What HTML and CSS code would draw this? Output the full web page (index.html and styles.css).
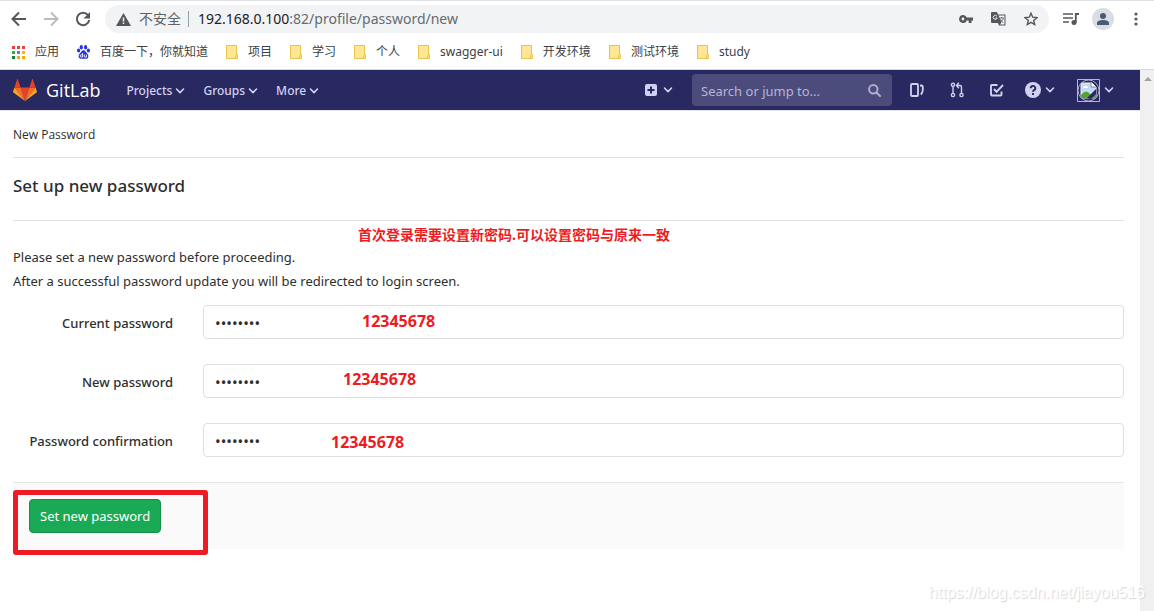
FILE: index.html
```html
<!DOCTYPE html>
<html lang="en">
<head>
<meta charset="utf-8">
<meta name="viewport" content="width=device-width, initial-scale=1">
<title>New Password · GitLab</title>
<link rel="stylesheet" href="styles.css">
</head>
<body>
<svg class="defs" width="0" height="0" aria-hidden="true">
  <symbol id="chevron" viewBox="0 0 10 10"><path d="M1.500 3l3.500 3.600L8.500 3" fill="none" stroke="currentColor" stroke-width="1.600" stroke-linecap="round" stroke-linejoin="round"/></symbol>
  <symbol id="folder" viewBox="0 0 12 14"><path d="M.5.500h10v9h1v4H.5z" fill="#ffe694" stroke="#e8c44d"/><path d="M9.500 13.500v-3l1-1" fill="none" stroke="#e8c44d"/></symbol>
</svg>
<div class="browser">
  <div class="toolbar">
    <button class="tool" aria-label="Back"><svg width="16" height="16" viewBox="0 0 16 16"><path d="M15 8H2M8 1.500L1.500 8 8 14.500" fill="none" stroke="#54585d" stroke-width="2"/></svg></button>
    <button class="tool" aria-label="Forward"><svg width="16" height="16" viewBox="0 0 16 16"><path d="M1 8h13M8 1.500L14.500 8 8 14.500" fill="none" stroke="#babcbe" stroke-width="2"/></svg></button>
    <button class="tool" aria-label="Reload"><svg width="16" height="16" viewBox="0 0 16 16"><path d="M13 4.200A6.200 6.200 0 1 0 14.200 9" fill="none" stroke="#54585d" stroke-width="2"/><path d="M15 1v6.500H8.500z" fill="#54585d"/></svg></button>
    <div class="omnibox">
      <svg width="15" height="13" viewBox="0 0 15 13"><path d="M7.500 0L15 13H0z" fill="#54585d"/><path d="M7.500 4.500v4M7.500 9.500v1.500" stroke="#f1f3f4" stroke-width="1.500"/></svg>
      <span class="insecure">不安全</span>
      <span class="url" role="textbox" aria-label="Address"><span class="host">192.168.0.100</span>:82/profile/password/new</span>
      <button class="tool" aria-label="Saved passwords"><svg width="14" height="8" viewBox="0 0 14 8"><path fill-rule="evenodd" d="M4 0a4 4 0 0 1 3.800 2.600H14v3h-1.500V8H9.700V5.600H7.800A4 4 0 1 1 4 0zM4 2.600a1.400 1.400 0 1 0 0 2.800 1.400 1.400 0 0 0 0-2.800z" fill="#54585d"/></svg></button>
      <button class="tool" aria-label="Translate"><svg width="15" height="14" viewBox="0 0 15 14"><path d="M1 0h5l1 2.500h7.500v11H8L7 11H1a1 1 0 0 1-1-1V1a1 1 0 0 1 1-1z" fill="#54585d"/><path d="M7.500 3.500h6v9H9l1.500-2z" fill="#f1f3f4"/><path d="M6 4.300A2 2 0 1 0 6.200 6H4.500" fill="none" stroke="#f1f3f4"/><path d="M8.500 6h4.500M10.700 5v1M12.300 6c-.3 2-1.500 3.300-3 4M9.300 7.200c.8 1.500 1.800 2.500 3 3.300" fill="none" stroke="#54585d" stroke-width=".8"/></svg></button>
      <button class="tool" aria-label="Bookmark this page"><svg width="14" height="14" viewBox="0 0 14 14"><path d="M7 1.200l1.700 4 4.300.4-3.300 2.800 1 4.200L7 10.400l-3.700 2.200 1-4.200L1 5.600l4.300-.4z" fill="none" stroke="#54585d" stroke-width="1.400"/></svg></button>
    </div>
    <button class="tool" aria-label="Media"><svg width="16" height="12" viewBox="0 0 16 12"><path d="M0 1h10M0 5h10M0 9h6" stroke="#54585d" stroke-width="1.600"/><path d="M12.800 9.500V1H16" fill="none" stroke="#54585d" stroke-width="1.800"/><circle cx="11" cy="9.500" r="2.500" fill="#54585d"/></svg></button>
    <button class="tool profile" aria-label="Profile"><svg width="12" height="12" viewBox="0 0 12 12"><circle cx="6" cy="3" r="3" fill="#4a5a72"/><path d="M0 12V10c0-2 3-3 6-3s6 1 6 3v2z" fill="#4a5a72"/></svg></button>
    <button class="tool" aria-label="Menu"><svg width="4" height="14" viewBox="0 0 4 14" fill="#54585d"><circle cx="2" cy="2" r="1.600"/><circle cx="2" cy="7" r="1.600"/><circle cx="2" cy="12" r="1.600"/></svg></button>
  </div>
  <nav class="bookmarks" aria-label="Bookmarks">
    <a href="#"><svg width="13" height="13" viewBox="0 0 13 13"><path d="M0 0h3v3H0zM5 0h3v3H5zM10 0h3v3h-3z" fill="#ea4335"/><path d="M0 5h3v3H0z" fill="#34a853"/><path d="M5 5h3v3H5z" fill="#4285f4"/><path d="M10 5h3v3h-3z" fill="#fbbc05"/><path d="M0 10h3v3H0z" fill="#188038"/><path d="M5 10h3v3H5zM10 10h3v3h-3z" fill="#fbab05"/></svg>应用</a>
    <a href="#"><svg width="13" height="14" viewBox="0 0 13 14" fill="#2932e1"><ellipse cx="4.300" cy="2.200" rx="1.600" ry="2.200"/><ellipse cx="8.600" cy="2.200" rx="1.600" ry="2.200"/><ellipse cx="1.600" cy="5.500" rx="1.600" ry="2"/><ellipse cx="11.400" cy="5.500" rx="1.600" ry="2"/><path d="M6.500 5.300c1.800 0 2.500 2 3.700 3.100 1.700 1.500 1.700 5.200-1.200 5.400-1.700.1-3.300-.2-5 0C1.200 14 .9 10.200 2.800 8.600 4.200 7.400 4.700 5.300 6.500 5.300z"/><path d="M5.600 8v4H4.200a1 1 0 0 1 0-2.200h1.400M7.300 9.500v2q0 .6.600.6h1.500V9.500" fill="none" stroke="#fff" stroke-width=".9"/></svg>百度一下，你就知道</a>
    <a href="#"><svg width="12" height="14"><use href="#folder"/></svg>项目</a>
    <a href="#"><svg width="12" height="14"><use href="#folder"/></svg>学习</a>
    <a href="#"><svg width="12" height="14"><use href="#folder"/></svg>个人</a>
    <a href="#"><svg width="12" height="14"><use href="#folder"/></svg>swagger-ui</a>
    <a href="#"><svg width="12" height="14"><use href="#folder"/></svg>开发环境</a>
    <a href="#"><svg width="12" height="14"><use href="#folder"/></svg>测试环境</a>
    <a href="#"><svg width="12" height="14"><use href="#folder"/></svg>study</a>
  </nav>
</div>
<div class="viewport">
  <div class="page">
    <header class="navbar">
      <a class="brand" href="#"><svg width="24" height="22" viewBox="0 0 24 22"><path d="M12 22L7.600 8.500h8.800z" fill="#e24329"/><path d="M12 22L7.600 8.500H1.400zM12 22l4.400-13.500h6.200z" fill="#fc6d26"/><path d="M1.400 8.500L.1 12.600c-.1.400 0 .8.300 1L12 22zM22.600 8.500l1.300 4.100c.1.400 0 .8-.3 1L12 22z" fill="#fca326"/><path d="M1.400 8.500h6.200L4.900.4c-.1-.4-.7-.4-.8 0zM22.600 8.500h-6.200L19.100.4c.1-.4.7-.4.8 0z" fill="#e24329"/></svg><span>GitLab</span></a>
      <nav class="menus" aria-label="Main">
        <button>Projects<svg width="10" height="10"><use href="#chevron"/></svg></button>
        <button>Groups<svg width="10" height="10"><use href="#chevron"/></svg></button>
        <button>More<svg width="10" height="10"><use href="#chevron"/></svg></button>
      </nav>
      <button class="add" aria-label="New"><svg width="12" height="12" viewBox="0 0 12 12"><rect width="12" height="12" rx="2" fill="#d1d1f0"/><path d="M6 2.500v7M2.500 6h7" stroke="#292961" stroke-width="2"/></svg><svg width="10" height="10"><use href="#chevron"/></svg></button>
      <label class="search"><input type="text" placeholder="Search or jump to..." aria-label="Search"><svg width="13" height="13" viewBox="0 0 13 13"><circle cx="5.300" cy="5.300" r="4.200" fill="none" stroke="#aeaed2" stroke-width="2"/><path d="M8.500 8.500l3.500 3.500" stroke="#aeaed2" stroke-width="2" stroke-linecap="round"/></svg></label>
      <div class="shortcuts">
        <a href="#" aria-label="Issues"><svg width="14" height="14" viewBox="0 0 14 14" fill="none" stroke="currentColor" stroke-width="1.800"><rect x="1" y="1" width="7" height="12" rx="1"/><path d="M10 2.500h1.200q1.600 0 1.600 1.700v2.600q0 2.800-2 4.700" /></svg></a>
        <a href="#" aria-label="Merge requests"><svg width="14" height="16" viewBox="0 0 14 16" fill="none" stroke="currentColor" stroke-width="1.400"><circle cx="3" cy="2.800" r="1.600"/><circle cx="3" cy="13" r="1.600"/><circle cx="11.500" cy="13" r="1.600"/><path d="M3 4.500v7M11.500 11.500V5q0-1.500-1.500-1.500H7M8.800.8L6.500 3.500l2.300 2.700"/></svg></a>
        <a href="#" aria-label="To-Do List"><svg width="14" height="14" viewBox="0 0 14 14" fill="none" stroke="currentColor" stroke-width="1.900"><path d="M7.500 2H2q-1 0-1 1v8.500q0 1 1 1h8.500q1 0 1-1V8.500M4 6l2.500 2.800L13 2"/></svg></a>
      </div>
      <button class="drop" aria-label="Help"><svg width="16" height="16" viewBox="0 0 16 16"><circle cx="8" cy="8" r="8" fill="#d1d1f0"/><path d="M5.700 6.200a2.300 2.200 0 1 1 3.300 1.900q-1 .6-1 1.600M8 11v2" fill="none" stroke="#292961" stroke-width="1.900"/></svg><svg width="10" height="10"><use href="#chevron"/></svg></button>
      <button class="drop user" aria-label="Account"><svg width="23" height="23" viewBox="0 0 23 23"><clipPath id="pic"><circle cx="11.500" cy="11.500" r="10.500"/></clipPath><g clip-path="url(#pic)"><path d="M4 4h11l4 4v11H4z" fill="#c5d9f7" stroke="#f4f4f6"/><path d="M14 3v5h5" fill="#fff" stroke="#888"/><path d="M4 19v-3q5-7 10 0l5-4v7z" fill="#4fa52e"/><path d="M6 9q1-3 3-2 2 0 2 2z" fill="#fff"/><path d="M10 19l9-9v5l-5 5z" fill="#292961"/></g><circle cx="11.500" cy="11.500" r="10.500" fill="none" stroke="#a9a9ca"/><path d="M.5.500h22v22H.5z" fill="none" stroke="#b8b8bd"/></svg><svg width="10" height="10"><use href="#chevron"/></svg></button>
    </header>
    <main class="content">
      <div class="breadcrumb"><a href="#">New Password</a></div>
      <h1>Set up new password</h1>
      <form class="form">
        <p>Please set a new password before proceeding.<br>After a successful password update you will be redirected to login screen.</p>
        <div class="row"><label for="current">Current password</label><input id="current" type="password" value="12345678"></div>
        <div class="row"><label for="new">New password</label><input id="new" type="password" value="12345678"></div>
        <div class="row"><label for="confirm">Password confirmation</label><input id="confirm" type="password" value="12345678"></div>
        <div class="actions"><button type="button">Set new password</button></div>
        <span class="note note-top">首次登录需要设置新密码.可以设置密码与原来一致</span>
        <span class="note note-current">12345678</span>
        <span class="note note-new">12345678</span>
        <span class="note note-confirm">12345678</span>
        <span class="frame"></span>
      </form>
    </main>
  </div>
  <div class="scrollbar"><svg width="8" height="4" viewBox="0 0 8 4"><path d="M4 0l4 4H0z" fill="#a3a3a3"/></svg></div>
</div>
<div class="watermark">https://blog.csdn.net/jiayou516</div>
</body>
</html>
```
FILE: styles.css
```css
* { box-sizing: border-box; }
body {
  margin: 0;
  min-height: 100vh;
  display: flex;
  flex-direction: column;
  position: relative;
  background: #fff;
  color: #2e2e2e;
  font: 13px/24px "Noto Sans", "Noto Sans CJK SC", sans-serif;
}
.defs { position: absolute; }
svg { display: block; flex: none; }
a { color: inherit; text-decoration: none; }
button { font: inherit; color: inherit; background: none; border: 0; padding: 0; }

.browser { border-top: 1px solid #dee1e6; border-bottom: 1px solid #d8d9de; }
.toolbar { display: flex; align-items: center; gap: 16px; height: 36px; padding: 0 16px 0 11px; }
.tool { display: flex; align-items: center; justify-content: center; flex: none; }
.omnibox {
  flex: 1;
  display: flex;
  align-items: center;
  gap: 18px;
  height: 28px;
  margin: 0 -2px 0 -2px;
  padding: 0 11px;
  border-radius: 14px;
  background: #f1f3f4;
}
.insecure {
  margin: 0 -9px 0 -10px;
  padding-right: 7px;
  border-right: 1px solid #9aa0a6;
  line-height: 16px;
  font-size: 14px;
  color: #5f6368;
}
.url { flex: 1; font-size: 14px; color: #666b70; white-space: nowrap; }
.host { color: #202124; }
.profile { width: 22px; height: 22px; margin: 0 4px 0 -3px; border-radius: 50%; background: #dadde3; }
.bookmarks { display: flex; align-items: center; gap: 18px; height: 32px; padding: 0 12px 2px; font-size: 12px; color: #3c4043; white-space: nowrap; }
.bookmarks a { display: flex; align-items: center; gap: 10px; }

.viewport { flex: 1; display: flex; }
.page { flex: 1; min-width: 0; }
.scrollbar { width: 14px; padding: 7px 0 0 4px; background: #f0f0f0; }

.navbar { display: flex; align-items: center; height: 41px; padding: 0 26px 0 13px; border-bottom: 1px solid #e4e4ea; background: #292961; color: #d1d1f0; }
.navbar button { display: flex; align-items: center; gap: 6px; }
.brand { display: flex; align-items: center; gap: 9px; color: #fff; font-size: 18px; font-family: "Open Sans", sans-serif; }
.menus { display: flex; gap: 18px; margin: 0 auto 0 26px; font-size: 12px; font-weight: 500; }
.navbar .menus button { gap: 3px; padding-top: 1px; }
.search { display: flex; align-items: center; width: 200px; height: 32px; margin: 0 18px 0 19px; padding: 0 11px 0 9px; border-radius: 4px; background: #4c4c7c; }
.search input { flex: 1; min-width: 0; padding: 1px 0 0; border: 0; outline: 0; background: none; font: inherit; color: #fff; }
.search input::placeholder { color: #b4b4d8; opacity: 1; }
.shortcuts { display: flex; align-items: center; gap: 26px; margin-right: 21px; }
.user { margin-left: 22px; }
.navbar .drop { gap: 4px; }

.content { padding: 0 16px 0 13px; }
.breadcrumb { height: 47px; border-bottom: 1px solid #e1e1e1; font: 12px/47px "Open Sans", sans-serif; }
h1 { margin: 0; height: 63px; border-bottom: 1px solid #e1e1e1; font-size: 17px; font-weight: 500; line-height: 56px; }
.form { position: relative; }
p { margin: 0; padding: 24px 0 12px; }
.row { display: flex; align-items: center; gap: 30px; margin-bottom: 25px; }
.row label { width: 160px; padding-top: 2px; text-align: right; font-weight: 500; }
.row input { flex: 1; min-width: 0; height: 34px; padding: 1px 11px 0; border: 1px solid #dfdfdf; border-radius: 4px; outline: 0; background: #fff; color: #2e2e2e; font: 15px "Noto Sans", sans-serif; }
.actions { padding: 16px; border-top: 1px solid #e5e5e5; background: #fafafa; }
.actions button { display: block; height: 34px; padding: 0 10px; border: 1px solid #168f48; border-radius: 4px; background: #1aaa55; color: #fff; }

.note { position: absolute; color: #ed1c24; font-size: 16px; font-weight: 700; line-height: 20px; }
.note-top { left: 345px; top: 4px; font-size: 14px; }
.note-current { left: 349px; top: 90px; }
.note-new { left: 330px; top: 148px; }
.note-confirm { left: 318px; top: 211px; }
.frame { position: absolute; left: 0; top: 269px; width: 195px; height: 65px; border: 5px solid #ed1c24; border-radius: 3px; }
.watermark { position: absolute; right: 9px; bottom: 8px; color: #fff; font: 16px/20px "Liberation Sans", Arial, sans-serif; text-shadow: 1px 1px 1px #d4d4d4; }
```
